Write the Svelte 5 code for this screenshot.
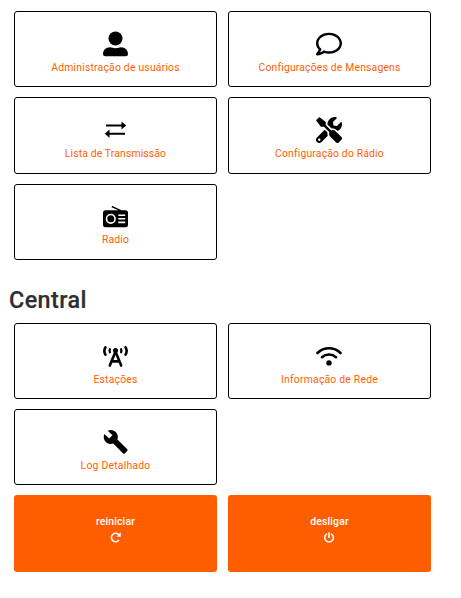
<script>
  const general = [
    { icon: 'user', label: 'Administração de usuários', ls: 0.2 },
    { icon: 'comment', label: 'Configurações de Mensagens', ls: 0.17 },
    { icon: 'arrows', label: 'Lista de Transmissão', ls: 0.13 },
    { icon: 'tools', label: 'Configuração do Rádio', ls: 0.16 },
    { icon: 'radio', label: 'Radio', ls: 0.15 },
  ];
  const central = [
    { icon: 'tower', label: 'Estações', ls: 0.2 },
    { icon: 'wifi', label: 'Informação de Rede', ls: 0.2 },
    { icon: 'wrench', label: 'Log Detalhado', ls: 0.22 },
  ];
</script>

{#snippet card(item)}
  <a class="card" href="#{item.icon}">
    {#if item.icon === 'user'}
      <svg viewBox="0.5 0 26 26"><circle cx="13" cy="7.5" r="7" /><path d="M7.5 16.3C9.4 16.3 10.4 17.2 13 17.2S16.6 16.3 18.5 16.3C22.8 16.3 25.5 19.3 25.5 23.3Q25.5 25.2 23.2 25.2H2.8Q.5 25.2 .5 23.3C.5 19.3 3.2 16.3 7.5 16.3Z" /></svg>
    {:else if item.icon === 'comment'}
      <svg class="even" viewBox="0 0 512 512"><path d="M256 32C114.6 32 0 125.1 0 240c0 47.6 19.9 91.2 52.9 126.3C38 405.7 7 439.1 6.5 439.5c-6.6 7-8.4 17.2-4.6 26S14.4 480 24 480c61.5 0 110-25.7 139.1-46.3C192 442.8 223.2 448 256 448c141.4 0 256-93.1 256-208S397.4 32 256 32zm0 368c-26.7 0-53.1-4.1-78.4-12.1l-22.7-7.2-19.5 13.8c-14.3 10.1-33.9 21.4-57.5 29 7.3-12.1 14.4-25.7 19.9-40.2l10.6-28.1-20.6-21.8C69.7 314.1 48 282.2 48 240c0-88.2 93.3-160 208-160s208 71.8 208 160-93.3 160-208 160z" /></svg>
    {:else if item.icon === 'arrows'}
      <svg viewBox="0.5 0 26 26"><path d="M3.5 7.4H19V4.4L23.7 8.5 19 12.6V9.5H3.5ZM22.5 15.7H7V12.6L2.3 16.7 7 20.8V17.8H22.5Z" /></svg>
    {:else if item.icon === 'tools'}
      <svg class="even" viewBox="0 0 512 512"><path d="M501.1 395.7L384 278.6c-23.1-23.1-57.6-27.6-85.4-13.9L192 158.1V96L64 0 0 64l96 128h62.1l106.6 106.6c-13.6 27.8-9.2 62.3 13.9 85.4l117.1 117.1c14.6 14.6 38.2 14.6 52.7 0l52.7-52.7c14.5-14.6 14.5-38.2 0-52.7zM331.7 225c28.3 0 54.9 11 74.9 31l19.4 19.4c15.8-6.9 30.8-16.5 43.8-29.5 37.1-37.1 49.7-89.3 37.9-136.7-2.2-9-13.5-12.1-20.1-5.5l-74.4 74.4-67.9-11.3L334 98.9l74.4-74.4c6.6-6.6 3.4-17.9-5.7-20.2-47.4-11.7-99.6.9-136.6 37.9-28.5 28.5-41.9 66.1-41.2 103.6l82.1 82.1c8.1-1.9 16.5-2.9 24.7-2.9zm-103.9 82l-56.7-56.7L18.7 402.8c-25 25-25 65.5 0 90.5s65.5 25 90.5 0l123.6-123.6c-7.6-19.9-9.9-41.6-5-62.7zM64 472c-13.2 0-24-10.8-24-24 0-13.3 10.7-24 24-24s24 10.7 24 24c0 13.2-10.7 24-24 24z" /></svg>
    {:else if item.icon === 'radio'}
      <svg viewBox="0.5 0 26 26"><path fill-rule="evenodd" d="M9.8 2.8 10.5 3.3 19.2 7.3H23Q25.5 7.3 25.5 9.8V21.8Q25.5 24.3 23 24.3H3Q.5 24.3 .5 21.8V9.8Q.5 7.3 3 7.3H15.8L9 4.2ZM8.3 10.7A5.1 5.1 0 1 0 8.3 20.9A5.1 5.1 0 1 0 8.3 10.7ZM8.3 12.3A3.5 3.5 0 1 1 8.3 19.3A3.5 3.5 0 1 1 8.3 12.3ZM15.8 11.4V13H22.7V11.4ZM15.8 15V16.6H22.7V15ZM15.8 18.6V20.2H22.7V18.6Z" /></svg>
    {:else if item.icon === 'tower'}
      <svg viewBox="0.5 0 26 26"><g fill="none" stroke="#000" stroke-linecap="round"><path stroke-width="2.6" d="M2.9 5.4Q.8 9 2.9 12.6M23.1 5.4Q25.2 9 23.1 12.6" /><path stroke-width="2.3" d="M7.4 7.3Q6.8 8.8 7.4 10.3M18.6 7.3Q19.2 8.8 18.6 10.3" /><path stroke-width="2.6" d="M7.3 23.6 13 9.6 18.7 23.6M9.2 19.4H16.8" /></g><circle cx="13" cy="8.6" r="2.5" /></svg>
    {:else if item.icon === 'wifi'}
      <svg class="even" viewBox="0 0 26 26"><g fill="none" stroke="#000" stroke-width="2.6" stroke-linecap="round"><path d="M1.5 11C8 4.7 18 4.7 24.5 11M6 15.2C10 11.6 16 11.6 20 15.2" /></g><circle cx="13" cy="20.9" r="2.7" /></svg>
    {:else}
      <svg viewBox="0.3 0.2 24 24"><path d="M22.7 19l-9.1-9.1c.9-2.3.4-5-1.5-6.9-2-2-5-2.4-7.4-1.3L9 6 6 9 1.6 4.7C.4 7.1.9 10.1 2.9 12.1c1.9 1.9 4.6 2.4 6.9 1.5l9.1 9.1c.4.4 1 .4 1.4 0l2.3-2.3c.5-.4.5-1.1.1-1.4z" /></svg>
    {/if}
    <span style="letter-spacing: {item.ls}px">{item.label}</span>
  </a>
{/snippet}

<main>
  <section class="grid">
    {#each general as item}{@render card(item)}{/each}
  </section>
  <h2>Central</h2>
  <section class="grid">
    {#each central as item}{@render card(item)}{/each}
    <i></i>
    <button>
      <span>reiniciar</span>
      <svg viewBox="0 0 12 12"><path fill="none" stroke="#fff" stroke-width="1.7" d="M9.8 8.8A4.6 4.6 0 1 1 9.2 2.6L10.4 3.8" /><path fill="#fff" d="M11.7.4V5.1H7Z" /></svg>
    </button>
    <button>
      <span>desligar</span>
      <svg viewBox="0.5 0 12 12"><path fill="none" stroke="#fff" stroke-width="1.7" stroke-linecap="round" d="M3.3 2.3A4.7 4.7 0 1 0 8.7 2.3M6 1V6" /></svg>
    </button>
  </section>
</main>

<style>
  :global(body) {
    margin: 0;
    background: #fff;
  }
  main {
    box-sizing: border-box;
    width: 461px;
    height: 598px;
    padding: 11px 30px 0 14px;
    font-family: Roboto, sans-serif;
    overflow: hidden;
  }
  .grid {
    display: grid;
    grid-template-columns: 203px 203px;
    grid-auto-rows: 76.25px;
    gap: 10px 11px;
  }
  .card,
  button {
    box-sizing: border-box;
    display: flex;
    flex-direction: column;
    align-items: center;
    border-radius: 3px;
    font-family: inherit;
    font-size: 10.4px;
    line-height: 14px;
    white-space: nowrap;
  }
  .card {
    border: 1px solid #000;
    padding-top: 18.5px;
    color: #ff5e00;
    text-decoration: none;
  }
  .card svg {
    width: 26px;
    height: 26px;
    margin-bottom: 4.4px;
  }
  .card svg.even {
    margin-right: 1px;
  }
  h2 {
    margin: 24px 0 7px -5px;
    height: 32px;
    font-size: 23.4px;
    line-height: 32px;
    font-weight: 500;
    letter-spacing: 0.4px;
    color: #2e2f31;
    -webkit-text-stroke: 0.2px #2e2f31;
  }
  button {
    margin: 0;
    height: 77px;
    padding: 20px 0 0;
    border: 0;
    background: #ff5e00;
    color: #fff;
    font-weight: 500;
    letter-spacing: 0.18px;
  }
  button svg {
    width: 11px;
    height: 11px;
    margin-top: 3px;
  }
</style>
